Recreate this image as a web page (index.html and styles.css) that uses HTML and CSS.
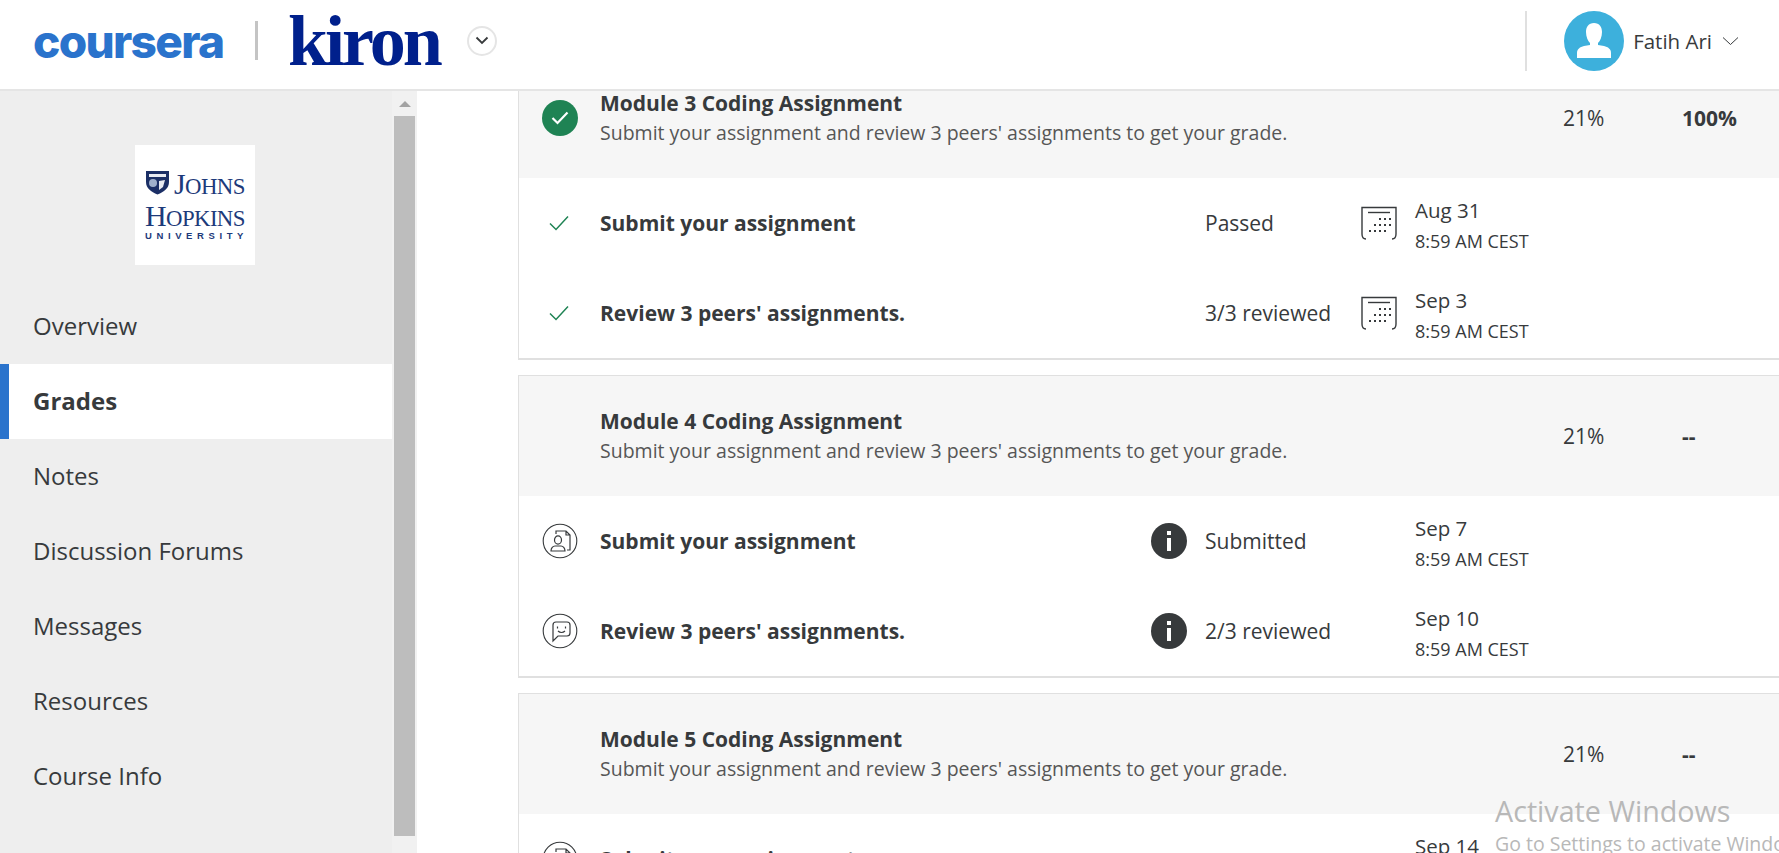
FILE: index.html
```html
<!DOCTYPE html>
<html lang="en">

<head>
    <meta charset="UTF-8">
    <meta name="viewport" content="width=device-width, initial-scale=1.0">
    <title>Grades</title>
    <link rel="stylesheet" href="styles.css">
</head>

<body>
    <svg class="sprites" width="0" height="0" aria-hidden="true">
        <symbol id="calendar" viewBox="0 0 36 34">
            <path d="M1 28V1.500h34V28M1 28c0 3 1 5 4 5M35 28c0 3-1 5-4 5" fill="none" stroke="currentColor" stroke-width="1.400" />
            <path d="M7 6.500h22" stroke="currentColor" stroke-width="1.400" />
            <path d="M18 13h2M23 13h2M28 13h2M13 19h2M18 19h2M23 19h2M28 19h2M8 25h2M13 25h2M18 25h2M23 25h2" stroke="currentColor" stroke-width="2" />
        </symbol>
        <symbol id="check" viewBox="0 0 20 16">
            <path d="M1 8.500l6 6L19 1.500" fill="none" stroke="currentColor" stroke-width="1.500" />
        </symbol>
        <symbol id="info" viewBox="0 0 36 36">
            <circle cx="18" cy="18" r="18" fill="currentColor" />
            <rect x="16" y="8" width="4" height="4" fill="#fff" />
            <rect x="16" y="15" width="4" height="13" fill="#fff" />
        </symbol>
        <symbol id="submit" viewBox="0 0 36 36">
            <circle cx="18" cy="18" r="16.800" fill="none" stroke="currentColor" stroke-width="1.100" />
            <path d="M14 11V8h10l4 4v15h-3M24 8v4h4" fill="none" stroke="currentColor" stroke-width="1.200" />
            <ellipse cx="16" cy="17" rx="3.500" ry="4.200" fill="none" stroke="currentColor" stroke-width="1.200" />
            <path d="M9 28c0-3 2-5 4-5h6c2 0 4 2 4 5z" fill="none" stroke="currentColor" stroke-width="1.200" />
        </symbol>
        <symbol id="review" viewBox="0 0 36 36">
            <circle cx="18" cy="18" r="16.800" fill="none" stroke="currentColor" stroke-width="1.100" />
            <path d="M11 28V12c0-2 1-3 3-3h11c2 0 3 1 3 3v8c0 2-1 3-3 3H16z" fill="none" stroke="currentColor" stroke-width="1.200" />
            <path d="M15.500 13.500v2M23.500 13.500v2M16 18c2 1.800 5 1.800 7 0" fill="none" stroke="currentColor" stroke-width="1.200" />
        </symbol>
    </svg>

    <header class="top_bar">
        <div class="brand">
            <span class="coursera_logo">coursera</span>
            <span class="brand_line"></span>
            <span class="kiron_logo">kiron</span>
            <span class="brand_toggle">
                <svg width="14" height="9" viewBox="0 0 14 9"><path d="M1.500 1.500L7 7l5.500-5.500" fill="none" stroke="#373a3c" stroke-width="1.800" /></svg>
            </span>
        </div>
        <div class="user_menu">
            <span class="avatar">
                <svg width="60" height="60" viewBox="0 0 60 60">
                    <path d="M30 12c-5.500 0-8 4-8 9 0 5 2 9 4 11v3h8v-3c2-2 4-6 4-11 0-5-2.500-9-8-9z" fill="#fff" />
                    <path d="M13 47v-5c0-4 3-6 7-7l6-1h8l6 1c4 1 7 3 7 7v5z" fill="#fff" />
                </svg>
            </span>
            <span class="user_name">Fatih Ari</span>
            <svg width="17" height="10" viewBox="0 0 17 10"><path d="M1 1.500l7.500 7 7.500-7" fill="none" stroke="#373a3c" stroke-width="1" /></svg>
        </div>
    </header>

    <div class="page_wrap">
        <aside class="side_bar">
            <div class="side_inner">
                <div class="school_logo">
                    <div class="school_top">
                        <svg width="25" height="25" viewBox="0 0 25 25">
                            <path d="M1 1h23v11c0 6-5 10-11.500 12.500C6 22 1 18 1 12z" fill="#1b2f66" />
                            <circle cx="8" cy="13" r="4" fill="#9fb0cc" />
                            <path d="M4 4h17v3H4zM14 11l6-1-2 7-4 3z" fill="#e8ebf2" />
                        </svg>
                        <span class="school_name"><b>J</b>OHNS</span>
                    </div>
                    <div class="school_name school_second"><b>H</b>OPKINS</div>
                    <div class="school_uni">UNIVERSITY</div>
                </div>
                <ul class="side_menu">
                    <li>Overview</li>
                    <li class="on">Grades</li>
                    <li>Notes</li>
                    <li>Discussion Forums</li>
                    <li>Messages</li>
                    <li>Resources</li>
                    <li>Course Info</li>
                </ul>
            </div>
            <div class="side_scroll">
                <span class="scroll_arrow"></span>
                <span class="scroll_thumb"></span>
            </div>
        </aside>

        <main class="grade_area">
            <section class="grade_card">
                <div class="grade_head grade_grid">
                    <span class="mod_done"><svg width="18" height="14" viewBox="0 0 18 14"><path d="M1.500 7l5 5L16.500 1.500" fill="none" stroke="#fff" stroke-width="2.200" /></svg></span>
                    <div class="head_text">
                        <h3>Module 3 Coding Assignment</h3>
                        <p>Submit your assignment and review 3 peers' assignments to get your grade.</p>
                    </div>
                    <span class="col_weight">21%</span>
                    <b class="col_grade">100%</b>
                </div>
                <div class="grade_row grade_grid">
                    <svg class="row_check" width="20" height="16"><use href="#check" /></svg>
                    <b class="row_title">Submit your assignment</b>
                    <span class="row_status">Passed</span>
                    <svg class="row_cal" width="36" height="34"><use href="#calendar" /></svg>
                    <div class="row_date"><span>Aug 31</span><small>8:59 AM CEST</small></div>
                </div>
                <div class="grade_row grade_grid">
                    <svg class="row_check" width="20" height="16"><use href="#check" /></svg>
                    <b class="row_title">Review 3 peers' assignments.</b>
                    <span class="row_status">3/3 reviewed</span>
                    <svg class="row_cal" width="36" height="34"><use href="#calendar" /></svg>
                    <div class="row_date"><span>Sep 3</span><small>8:59 AM CEST</small></div>
                </div>
            </section>

            <section class="grade_card">
                <div class="grade_head grade_grid">
                    <div class="head_text">
                        <h3>Module 4 Coding Assignment</h3>
                        <p>Submit your assignment and review 3 peers' assignments to get your grade.</p>
                    </div>
                    <span class="col_weight">21%</span>
                    <b class="col_grade">--</b>
                </div>
                <div class="grade_row grade_grid">
                    <svg class="row_icon" width="36" height="36"><use href="#submit" /></svg>
                    <b class="row_title">Submit your assignment</b>
                    <svg class="row_info" width="36" height="36"><use href="#info" /></svg>
                    <span class="row_status">Submitted</span>
                    <div class="row_date"><span>Sep 7</span><small>8:59 AM CEST</small></div>
                </div>
                <div class="grade_row grade_grid">
                    <svg class="row_icon" width="36" height="36"><use href="#review" /></svg>
                    <b class="row_title">Review 3 peers' assignments.</b>
                    <svg class="row_info" width="36" height="36"><use href="#info" /></svg>
                    <span class="row_status">2/3 reviewed</span>
                    <div class="row_date"><span>Sep 10</span><small>8:59 AM CEST</small></div>
                </div>
            </section>

            <section class="grade_card">
                <div class="grade_head grade_grid">
                    <div class="head_text">
                        <h3>Module 5 Coding Assignment</h3>
                        <p>Submit your assignment and review 3 peers' assignments to get your grade.</p>
                    </div>
                    <span class="col_weight">21%</span>
                    <b class="col_grade">--</b>
                </div>
                <div class="grade_row grade_grid">
                    <svg class="row_icon" width="36" height="36"><use href="#submit" /></svg>
                    <b class="row_title">Submit your assignment</b>
                    <div class="row_date"><span>Sep 14</span><small>8:59 AM CEST</small></div>
                </div>
            </section>
        </main>
    </div>

    <div class="win_mark">
        <p>Activate Windows</p>
        <small>Go to Settings to activate Windows.</small>
    </div>
</body>

</html>
```

FILE: styles.css
```css
* {
    margin: 0;
    padding: 0;
    box-sizing: border-box;
}

li {
    list-style: none;
}

html,
body {
    height: 100%;
    overflow: hidden;
}

body {
    display: flex;
    flex-direction: column;
    font-family: "Open Sans", "Liberation Sans", sans-serif;
    color: #373a3c;
    background-color: #fff;
}

.sprites {
    position: absolute;
}

/* top bar */
.top_bar {
    flex: none;
    height: 91px;
    display: flex;
    justify-content: space-between;
    align-items: center;
    padding: 0 40px 8px 33px;
    border-bottom: 2px solid #e5e5e5;
}

.brand {
    display: flex;
    align-items: center;
}

.coursera_logo {
    width: 191px;
    font-family: Inter, sans-serif;
    font-size: 46px;
    font-weight: 800;
    letter-spacing: -1.700px;
    line-height: 40px;
    color: #2a73cc;
}

.brand_line {
    width: 3px;
    height: 39px;
    margin: 0 30px 0 31px;
    background-color: #c4c4c4;
}

.kiron_logo {
    width: 153px;
    font-family: "Liberation Serif", serif;
    font-size: 72px;
    font-weight: 700;
    letter-spacing: -3px;
    line-height: 60px;
    color: #00208c;
}

.brand_toggle {
    width: 30px;
    height: 30px;
    margin-left: 26px;
    display: flex;
    justify-content: center;
    align-items: center;
    border: 2px solid #e5e5e5;
    border-radius: 50%;
}

.user_menu {
    height: 60px;
    display: flex;
    align-items: center;
    padding-left: 37px;
    border-left: 2px solid #e0e0e0;
}

.avatar {
    width: 60px;
    height: 60px;
    border-radius: 50%;
    background-color: #3db0dc;
}

.avatar svg {
    display: block;
}

.user_name {
    margin: 0 10px 0 9px;
    font-size: 20.500px;
}

/* sidebar */
.page_wrap {
    flex: 1;
    min-height: 0;
    display: flex;
}

.side_bar {
    flex: none;
    width: 417px;
    display: flex;
    background-color: #eee;
}

.side_inner {
    width: 392px;
}

.school_logo {
    width: 120px;
    height: 120px;
    margin: 54px 0 24px 135px;
    padding: 25px 0 0 10px;
    background-color: #fff;
    color: #1d3a7a;
}

.school_top {
    display: flex;
    align-items: flex-start;
    gap: 4px;
}

.school_name {
    font-family: "Liberation Serif", serif;
    font-size: 22.800px;
    line-height: 28px;
    letter-spacing: -.6px;
    white-space: nowrap;
}

.school_name b {
    font-size: 30px;
    font-weight: 400;
}

.school_second {
    margin-top: 1px;
}

.school_uni {
    margin-top: -3px;
    font-family: "Liberation Sans", sans-serif;
    font-size: 9.500px;
    font-weight: 700;
    letter-spacing: 4.600px;
    white-space: nowrap;
}

.side_menu li {
    height: 75px;
    line-height: 73px;
    padding-left: 33px;
    font-size: 24px;
}

.side_menu li.on {
    border-left: 9px solid #2a73cc;
    padding-left: 24px;
    background-color: #fff;
    font-weight: 700;
}

.side_scroll {
    width: 25px;
    display: flex;
    flex-direction: column;
    align-items: center;
    background-color: #f1f1f1;
}

.scroll_arrow {
    width: 0;
    height: 0;
    margin: 10px 0 9px;
    border: 6px solid transparent;
    border-top: 0;
    border-bottom-color: #a3a3a3;
}

.scroll_thumb {
    width: 21px;
    height: 720px;
    background-color: #bdbdbd;
}

/* grades */
.grade_area {
    flex: 1;
    min-width: 0;
    overflow: hidden;
    padding-left: 101px;
}

.grade_card {
    width: 1300px;
    margin-bottom: 15px;
    border: 1px solid #e0e0e0;
    border-bottom-width: 2px;
}

.grade_card:first-child {
    margin-top: -34px;
}

.grade_grid {
    display: grid;
    grid-template-columns: 81px 551px 54px 156px 54px 148px 119px 1fr;
    align-items: center;
}

.grade_head {
    height: 120px;
    background-color: #f6f6f6;
}

.mod_done {
    grid-column: 1;
    width: 36px;
    height: 36px;
    margin-left: 23px;
    display: flex;
    justify-content: center;
    align-items: center;
    border-radius: 50%;
    background-color: #1f8354;
}

.head_text {
    grid-column: 2 / 7;
}

.head_text h3 {
    font-size: 21px;
    font-weight: 700;
    line-height: 30px;
}

.head_text p {
    font-size: 19.500px;
    line-height: 30px;
    color: #565656;
}

.col_weight {
    grid-column: 7;
    font-size: 21px;
}

.col_grade {
    grid-column: 8;
    font-size: 21px;
}

.grade_row {
    height: 90px;
}

.row_check {
    grid-column: 1;
    margin-left: 30px;
    color: #1f8354;
}

.row_icon {
    grid-column: 1;
    margin-left: 23px;
}

.row_title {
    grid-column: 2;
    font-size: 21px;
}

.row_info {
    grid-column: 3;
}

.row_status {
    grid-column: 4;
    font-size: 21px;
}

.row_cal {
    grid-column: 5;
}

.row_date {
    grid-column: 6;
    padding-top: 5px;
    font-size: 20.500px;
    line-height: 30px;
}

.row_date small {
    display: block;
    margin-top: 1px;
    font-size: 18px;
}

/* windows mark */
.win_mark {
    position: absolute;
    left: 1495px;
    top: 792px;
    white-space: nowrap;
    color: #b8b8b8;
}

.win_mark p {
    font-size: 28.700px;
    line-height: 38px;
}

.win_mark small {
    display: block;
    margin-top: 2px;
    font-size: 19.500px;
    line-height: 24px;
}
```
